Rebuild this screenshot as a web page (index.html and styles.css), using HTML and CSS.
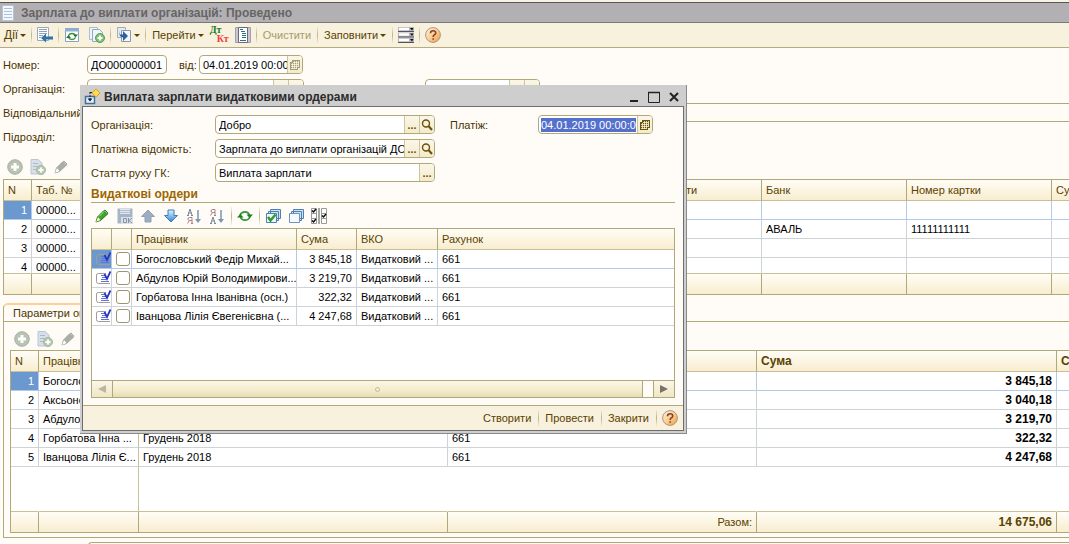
FILE: index.html
```html
<!DOCTYPE html>
<html lang="uk">
<head>
<meta charset="utf-8">
<title>Зарплата до виплати організацій</title>
<link rel="stylesheet" href="styles.css">
</head>
<body>
<svg class="sprite" aria-hidden="true">
  <defs>
    <linearGradient id="g-orange" x1="0" y1="0" x2="1" y2="1"><stop offset="0" stop-color="#fff3dc"/><stop offset=".5" stop-color="#fbcf94"/><stop offset="1" stop-color="#f29a38"/></linearGradient>
    <linearGradient id="g-blue" x1="0" y1="0" x2="0" y2="1"><stop offset="0" stop-color="#e2f3fd"/><stop offset="1" stop-color="#2f86d6"/></linearGradient>
  </defs>
  <symbol id="i-doc" viewBox="0 0 16 16"><path d="M2.500.5h11v15h-11z" fill="#f4f8fc" stroke="#b3c4d4"/><path d="M4 3.500h8M4 6.500h8M4 9.500h8M4 12.500h8" stroke="#a9c3dc"/></symbol>
  <symbol id="i-back" viewBox="0 0 16 16"><path d="M.5.5h11v13H.5z" fill="#fff" stroke="#9aaaba"/><path d="M2 2.500h8M2 4.500h8M2 6.500h8M2 8.500h4M2 10.500h2" stroke="#8ea5bb"/><path d="M4 11l5-4.500v3h7v3H9v3z" fill="#2f74a8"/></symbol>
  <symbol id="i-refreshwin" viewBox="0 0 16 16"><path d="M1.500 1.500h13v13h-13z" fill="#fff" stroke="#87a3c1"/><path d="M1 3h14" stroke="#8fb0d4" stroke-width="3"/><path d="M4.500 8.500Q5.500 6.500 8 6.500t3.500 2M11.500 10.500Q10.500 12.500 8 12.500t-3.500-2" fill="none" stroke="#3c9442" stroke-width="1.500"/><path d="M9 7.500h5L11.500 10.500zM7 11H2L4.500 8z" fill="#1f7c27"/></symbol>
  <symbol id="i-copyadd" viewBox="0 0 16 16"><path d="M.5.5h8v12h-8z" fill="#edf3f8" stroke="#a9bfd2"/><path d="M3.500 2.500h7l3 3v9h-10z" fill="#f0f5fa" stroke="#8faac2"/><circle cx="11" cy="11" r="4.500" fill="#7dc075" stroke="#5c9c57"/><path d="M11 8.500v5M8.500 11h5" stroke="#fff" stroke-width="2"/></symbol>
  <symbol id="i-addrow" viewBox="0 0 16 16"><path d="M1 .5h7l4 3.500v11H1z" fill="#b9cdea" stroke="#8aa3c6"/><path d="M3 4.500h5M3 7.500h7M3 10.500h4" stroke="#6f8fbd"/><circle cx="11" cy="11" r="4.500" fill="#7dae75" stroke="#5c8c57"/><path d="M11 8.500v5M8.500 11h5" stroke="#fff" stroke-width="2"/></symbol>
  <symbol id="i-forward" viewBox="0 0 16 16"><path d="M1.500.5h8v10h-8z" fill="#e4eaf0" stroke="#a0adba"/><path d="M5.500 3.500h9v11h-9z" fill="#f4f7fa" stroke="#8a9aab"/><path d="M3 3v4.500h4V4l5 5-5 5v-3.500Q3 10.500 3 3" fill="#2b6299"/></symbol>
  <symbol id="i-struct" viewBox="0 0 16 16"><path d="M.5.500h15v15H.5z" fill="#c9c5d2" stroke="#a3a0ae"/><path d="M3.500.5h9v15h-9z" fill="#fff" stroke="#6c6a78"/><path d="M5 2.500h3M6 4.500h4M7 6.500h4M7 8.500h4M7 10.500h4M5 13.500h6" stroke="#23708f"/></symbol>
  <symbol id="i-rows" viewBox="0 0 16 16"><path d="M0 0h16v5H0zM0 5.500h16v5H0zM0 11h16v5H0z" fill="#b5b5bb"/><path d="M1 2h10M1 7.500h10M1 13h10" stroke="#fff" stroke-width="2.500"/><path d="M0 4.500h16M0 10h16M0 15.500h16" stroke="#55555c"/><path d="M12 1h3.500L14 3.500zM12 6.500h3.500L14 9zM12 12h3.500L14 14.500z" fill="#111"/></symbol>
  <symbol id="i-help" viewBox="0 0 16 16"><circle cx="8" cy="8" r="7.400" fill="url(#g-orange)" stroke="#aa978a"/><path d="M5.500 6.200q0-2.500 2.600-2.500t2.600 2.200q0 1.200-1.400 2Q8.200 8.500 8.200 10M8.200 11.300v1.500" fill="none" stroke="#87412c" stroke-width="1.600"/></symbol>
  <symbol id="i-add" viewBox="0 0 16 16"><circle cx="8" cy="8" r="7.300" fill="#7ba678" stroke="#777"/><path d="M8 4v8M4 8h8" stroke="#fff" stroke-width="3"/></symbol>
  <symbol id="i-pencil" viewBox="0 0 16 16"><path d="M2 14l1.500-5L9.500 3l3.500 3.500-6.500 6z" fill="#3fa52c" stroke="#1e7413"/><path d="M9.500 3l1.500-1 3 3-1 1.500z" fill="#83cf6f" stroke="#2a861c"/><path d="M4 9l2.500 3L2 14z" fill="#fff1c8"/><path d="M5 8.500l5-5" stroke="#a7e598"/></symbol>
  <symbol id="i-pencil-off" viewBox="0 0 16 16"><path d="M2 14l1.500-5L9.500 3l3.500 3.500-6.500 6z" fill="#6d7f6a" stroke="#596957"/><path d="M9.500 3l1.500-1 3 3-1 1.500z" fill="#93a390" stroke="#66755f"/><path d="M4 9l2.500 3L2 14z" fill="#fff"/></symbol>
  <symbol id="i-save" viewBox="0 0 16 16"><path d="M.5.500h15v15H.5z" fill="#8fa4bd"/><path d="M3 1h10v5H3z" fill="#d8e1eb"/><path d="M3 2.500h10M3 4.500h10" stroke="#9fb2c9"/><path d="M4 9h12v7H4z" fill="#d3dae3"/><path d="M6.500 10.500h3v4h-3zM11.500 10v5M15 10l-3 2.500 3 2.500" fill="none" stroke="#667b95"/></symbol>
  <symbol id="i-up" viewBox="0 0 16 16"><path d="M8 2l6.500 6.500H11V14H5V8.500H1.500z" fill="#9dadc2" stroke="#8f9fb5"/></symbol>
  <symbol id="i-down" viewBox="0 0 16 16"><path d="M8 14L1.500 7.500H5V2h6v5.500h3.500z" fill="url(#g-blue)" stroke="#3b7db9"/></symbol>
  <symbol id="i-az" viewBox="0 0 16 16"><path d="M1 7.500h2M5 7.500h2M2 7l2-6 2 6M2.800 5h2.600" fill="none" stroke="#76879c"/><path d="M6 15.500V9.500H3.500q-1.500 0-1.500 1.500t1.500 1.500H6M3.500 12.500L1.500 15.500M5 15.500h2" fill="none" stroke="#aa8088"/><path d="M12 2v10" stroke="#7b95b2" stroke-width="1.500"/><path d="M9 11h6l-3 4z" fill="#7b95b2"/></symbol>
  <symbol id="i-za" viewBox="0 0 16 16"><path d="M1 15.500h2M5 15.500h2M2 15l2-6 2 6M2.800 13h2.600" fill="none" stroke="#76879c"/><path d="M6 7.500V1.500H3.500Q2 1.500 2 3t1.500 1.500H6M3.500 4.500L1.500 7.500M5 7.500h2" fill="none" stroke="#aa8088"/><path d="M12 2v10" stroke="#7b95b2" stroke-width="1.500"/><path d="M9 11h6l-3 4z" fill="#7b95b2"/></symbol>
  <symbol id="i-refresh" viewBox="0 0 16 16"><path d="M3 7Q4.500 3.800 8 3.800T12.500 7M13 9Q11.500 12.200 8 12.200T3.500 9" fill="none" stroke="#35993a" stroke-width="1.700"/><path d="M9.500 6.500H16L12.700 10zM6.500 9.500H0L3.300 6z" fill="#1f7c27"/></symbol>
  <symbol id="i-checkall" viewBox="0 0 16 16"><path d="M5.500 1.500h10v9h-10zM3.500 3.500h10v9h-10z" fill="#cfe3f4" stroke="#4d81ae"/><path d="M1.500 5.500h10v9h-10z" fill="#eef6fc" stroke="#4d81ae"/><path d="M3 9l2.500 3.500L10.500 6.500" fill="none" stroke="#2e9b33" stroke-width="2.500"/></symbol>
  <symbol id="i-uncheck" viewBox="0 0 16 16"><path d="M5.500 1.500h10v9h-10zM3.500 3.500h10v9h-10z" fill="#cfe3f4" stroke="#4d81ae"/><path d="M1.500 5.500h10v9h-10z" fill="#f6faff" stroke="#6d93be"/></symbol>
  <symbol id="i-invert" viewBox="0 0 16 16"><path d="M.5.500h5v15h-5zM10.500.5h5v15h-5z" fill="#fff" stroke="#999"/><path d="M.5 5.500h5M.5 10.500h5M10.500 5.500h5M10.500 10.500h5" stroke="#999"/><path d="M8 0v16" stroke="#555"/><path d="M1 2.500L2.500 4 5 1M1 12.500L2.500 14 5 11M11 7.500L12.500 9 15 6" fill="none" stroke="#111" stroke-width="1.500"/></symbol>
  <symbol id="i-rowdoc" viewBox="0 0 16 16"><path d="M10 3.500H2.500Q.5 3.500.5 5v6.500q0 2 2 2H14" fill="none" stroke="#a19b9b"/><path d="M5 5.500h4M6 7.500h4M5 9.500h5M5 11.500h8" stroke="#6372d6"/><path d="M8.500 4l2.500 5L14.500 1.500" fill="none" stroke="#2637bd" stroke-width="1.800"/></symbol>
  <symbol id="i-window" viewBox="0 0 16 16"><path d="M1.500 7.500h9v7h-9z" fill="#e6f1fa" stroke="#426f9c" stroke-width="1.500"/><path d="M6 3v8" stroke="#222" stroke-dasharray="2 1"/><path d="M3.500 9.500h5L6 12.500z" fill="#123"/><path d="M6 3.500h3" stroke="#222"/><path d="M12 0l4 4-4 4-4-4z" fill="#ffda4d" stroke="#d9a321"/></symbol>
  <symbol id="i-cal" viewBox="0 0 12 12"><path d="M3 1h8v8H9v2H1V3h2z" fill="currentColor"/><path d="M4 3.500h6M2 5.500h8M2 7.500h8M2 9.500h6M3.500 4v6M5.500 2v8M7.500 2v8M9.500 2v6" stroke="#fbf5e0" stroke-width=".8"/></symbol>
  <symbol id="i-lens" viewBox="0 0 12 12"><circle cx="5" cy="4.500" r="3.500" fill="none" stroke="currentColor" stroke-width="1.400"/><path d="M7.500 7l3.500 4" stroke="currentColor" stroke-width="2"/></symbol>
</svg>

<main class="app">
  <header class="titlebar"><svg class="icon"><use href="#i-doc"/></svg><h1>Зарплата до виплати організацій: Проведено</h1></header>
  <nav class="toolbar">
    <button class="tb-text first">Дії<i class="caret"></i></button><i class="sep"></i>
    <button class="tb-icon" aria-label="Записати"><svg class="icon"><use href="#i-back"/></svg></button><i class="sep"></i>
    <button class="tb-icon" aria-label="Оновити"><svg class="icon"><use href="#i-refreshwin"/></svg></button>
    <button class="tb-icon" aria-label="Копіювати"><svg class="icon"><use href="#i-copyadd"/></svg></button><i class="sep"></i>
    <button class="tb-icon" aria-label="На підставі"><svg class="icon"><use href="#i-forward"/></svg><i class="caret"></i></button><i class="sep"></i>
    <button class="tb-text">Перейти<i class="caret"></i></button>
    <button class="tb-icon dtkt"><span class="dt">Дт</span><span class="kt">Кт</span></button>
    <button class="tb-icon" aria-label="Структура"><svg class="icon"><use href="#i-struct"/></svg></button><i class="sep"></i>
    <button class="tb-text" disabled>Очистити</button><i class="sep"></i>
    <button class="tb-text">Заповнити<i class="caret"></i></button><i class="sep"></i>
    <button class="tb-icon" aria-label="Рядки"><svg class="icon"><use href="#i-rows"/></svg></button><i class="sep"></i>
    <button class="tb-icon" aria-label="Довідка"><svg class="icon"><use href="#i-help"/></svg></button>
  </nav>

  <section class="form">
    <div class="row"><label class="cap" for="num">Номер:</label><span class="field num"><input id="num" value="ДО000000001"></span>
      <label class="cap-from" for="date">від:</label><span class="field date muted"><input id="date" value="04.01.2019 00:00:00"><button aria-label="Календар"><svg><use href="#i-cal"/></svg></button></span></div>
    <div class="row"><label class="cap" for="org">Організація:</label><span class="field org"><input id="org"><button aria-label="Вибрати"></button><button aria-label="Відкрити"></button></span>
      <span class="field dept"><input aria-label="Місяць"><button aria-label="Вибрати місяць"></button><button aria-label="Змінити місяць"></button></span></div>
    <div class="row"><label class="cap" for="resp">Відповідальний:</label><span class="field wide"><input id="resp" readonly></span></div>
    <div class="row"><span class="cap">Підрозділ:</span></div>
  </section>

  <div class="tools faded">
    <button aria-label="Додати"><svg class="icon"><use href="#i-add"/></svg></button>
    <button aria-label="Скопіювати"><svg class="icon"><use href="#i-addrow"/></svg></button>
    <button aria-label="Редагувати"><svg class="icon"><use href="#i-pencil-off"/></svg></button>
  </div>
  <table class="grid employees">
    <colgroup><col class="w28"><col class="w49"><col><col class="w80"><col class="w145"><col class="w145"><col class="w20"></colgroup>
    <thead><tr><th>N</th><th>Таб. №</th><th></th><th>ти</th><th>Банк</th><th>Номер картки</th><th>Су</th></tr></thead>
    <tbody>
      <tr class="current"><td class="n">1</td><td>00000...</td><td></td><td></td><td></td><td></td><td></td></tr>
      <tr><td class="n">2</td><td>00000...</td><td></td><td></td><td>АВАЛЬ</td><td>11111111111</td><td></td></tr>
      <tr><td class="n">3</td><td>00000...</td><td></td><td></td><td></td><td></td><td></td></tr>
      <tr class="cut"><td class="n"><span>4</span></td><td><span>00000...</span></td><td></td><td></td><td></td><td></td><td></td></tr>
    </tbody>
    <tfoot><tr><td></td><td></td><td></td><td></td><td></td><td></td><td></td></tr></tfoot>
  </table>

  <div class="tabs"><button class="tab">Параметри оплати</button></div>
  <section class="panel">
    <div class="tools faded">
      <button aria-label="Додати рядок"><svg class="icon"><use href="#i-add"/></svg></button>
      <button aria-label="Скопіювати рядок"><svg class="icon"><use href="#i-addrow"/></svg></button>
      <button aria-label="Редагувати рядок"><svg class="icon"><use href="#i-pencil-off"/></svg></button>
    </div>
    <table class="grid payments">
      <colgroup><col class="w28"><col class="w100"><col><col class="w309"><col class="w300"><col class="w12"></colgroup>
      <thead><tr><th>N</th><th>Працівник</th><th></th><th></th><th class="b">Сума</th><th class="b">С</th></tr></thead>
      <tbody>
        <tr class="current"><td class="n">1</td><td>Богословс...</td><td>Грудень 2018</td><td>661</td><td class="n b">3 845,18</td><td></td></tr>
        <tr><td class="n">2</td><td>Аксьонов ...</td><td>Грудень 2018</td><td>661</td><td class="n b">3 040,18</td><td></td></tr>
        <tr><td class="n">3</td><td>Абдулов ...</td><td>Грудень 2018</td><td>661</td><td class="n b">3 219,70</td><td></td></tr>
        <tr><td class="n">4</td><td>Горбатова Інна ...</td><td>Грудень 2018</td><td>661</td><td class="n b">322,32</td><td></td></tr>
        <tr><td class="n">5</td><td>Іванцова Лілія Є...</td><td>Грудень 2018</td><td>661</td><td class="n b">4 247,68</td><td></td></tr>
        <tr class="blank"><td></td><td></td><td></td><td></td><td></td><td></td></tr>
      </tbody>
      <tfoot><tr><td></td><td></td><td></td><td class="n">Разом:</td><td class="n b">14 675,06</td><td></td></tr></tfoot>
    </table>
  </section>
  <div class="comment"></div>
</main>

<section class="dialog" role="dialog" aria-labelledby="dlg-title">
  <header class="dlg-head"><svg class="icon"><use href="#i-window"/></svg><h2 id="dlg-title">Виплата зарплати видатковими ордерами</h2>
    <button aria-label="Згорнути"><svg viewBox="0 0 12 12"><path d="M2 10h8" stroke="#222" stroke-width="2"/></svg></button>
    <button aria-label="Розгорнути"><svg viewBox="0 0 12 12"><path d="M.5 1.500h11v10H.5z" fill="none" stroke="#222"/><path d="M0 1.500h12" stroke="#222" stroke-width="1.500"/></svg></button>
    <button aria-label="Закрити вікно"><svg viewBox="0 0 12 12"><path d="M2 2l8 8M10 2l-8 8" stroke="#222" stroke-width="2"/></svg></button>
  </header>
  <div class="dlg-frame">
    <div class="dlg-body">
      <div class="dlg-form">
        <div class="row"><label class="dcap" for="d-org">Організація:</label><span class="field dfield"><input id="d-org" value="Добро"><button aria-label="Вибрати організацію">...</button><button aria-label="Відкрити організацію"><svg><use href="#i-lens"/></svg></button></span>
          <label class="dcap-pay" for="d-date">Платіж:</label><span class="field ddate"><input id="d-date" value="04.01.2019 00:00:0"><button aria-label="Обрати дату"><svg><use href="#i-cal"/></svg></button></span></div>
        <div class="row"><label class="dcap" for="d-doc">Платіжна відомість:</label><span class="field dfield"><input id="d-doc" value="Зарплата до виплати організацій ДО000000001"><button aria-label="Вибрати відомість">...</button><button aria-label="Відкрити відомість"><svg><use href="#i-lens"/></svg></button></span></div>
        <div class="row"><label class="dcap" for="d-art">Стаття руху ГК:</label><span class="field dfield"><input id="d-art" value="Виплата зарплати"><button aria-label="Вибрати статтю">...</button></span></div>
      </div>
      <h3>Видаткові ордери</h3>
      <div class="tools orders-tools">
        <button aria-label="Редагувати ордер"><svg class="icon"><use href="#i-pencil"/></svg></button>
        <button aria-label="Зберегти" class="dim"><svg class="icon"><use href="#i-save"/></svg></button>
        <button aria-label="Вгору"><svg class="icon"><use href="#i-up"/></svg></button>
        <button aria-label="Вниз"><svg class="icon"><use href="#i-down"/></svg></button>
        <button aria-label="За зростанням"><svg class="icon"><use href="#i-az"/></svg></button>
        <button aria-label="За спаданням"><svg class="icon"><use href="#i-za"/></svg></button><i class="sep"></i>
        <button aria-label="Оновити список"><svg class="icon"><use href="#i-refresh"/></svg></button><i class="sep"></i>
        <button aria-label="Позначити всі"><svg class="icon"><use href="#i-checkall"/></svg></button>
        <button aria-label="Зняти позначки"><svg class="icon"><use href="#i-uncheck"/></svg></button>
        <button aria-label="Інвертувати"><svg class="icon"><use href="#i-invert"/></svg></button>
      </div>
      <div class="orders-box">
        <table class="grid orders">
          <colgroup><col class="w20"><col class="w20"><col class="w165"><col class="w60"><col class="w81"><col></colgroup>
          <thead><tr><th></th><th></th><th>Працівник</th><th>Сума</th><th>ВКО</th><th>Рахунок</th></tr></thead>
          <tbody>
            <tr class="current"><td class="ic"><svg class="icon"><use href="#i-rowdoc"/></svg></td><td class="ic"><input type="checkbox" aria-label="Богословський"></td><td>Богословський Федір Михай...</td><td class="n">3 845,18</td><td>Видатковий ...</td><td>661</td></tr>
            <tr><td class="ic"><svg class="icon"><use href="#i-rowdoc"/></svg></td><td class="ic"><input type="checkbox" aria-label="Абдулов"></td><td>Абдулов Юрій Володимирови...</td><td class="n">3 219,70</td><td>Видатковий ...</td><td>661</td></tr>
            <tr><td class="ic"><svg class="icon"><use href="#i-rowdoc"/></svg></td><td class="ic"><input type="checkbox" aria-label="Горбатова"></td><td>Горбатова Інна Іванівна (осн.)</td><td class="n">322,32</td><td>Видатковий ...</td><td>661</td></tr>
            <tr><td class="ic"><svg class="icon"><use href="#i-rowdoc"/></svg></td><td class="ic"><input type="checkbox" aria-label="Іванцова"></td><td>Іванцова Лілія Євегенієвна (...</td><td class="n">4 247,68</td><td>Видатковий ...</td><td>661</td></tr>
          </tbody>
        </table>
        <div class="scroll"><button class="left" aria-label="Ліворуч"></button><div class="thumb"><i></i></div><button class="right" aria-label="Праворуч"></button></div>
      </div>
    </div>
    <footer class="dlg-foot">
      <button>Створити</button><i class="sep"></i><button>Провести</button><i class="sep"></i><button>Закрити</button><i class="sep"></i>
      <button class="help" aria-label="Довідка"><svg class="icon"><use href="#i-help"/></svg></button>
    </footer>
  </div>
</section>
</body>
</html>
```

FILE: styles.css
```css
* { box-sizing: border-box; }
body {
  margin: 0;
  background: #fffcf7;
  color: #4a3500;
  font: 11px/18px "Liberation Sans", Arial, sans-serif;
  overflow: hidden;
}
.sprite { position: absolute; width: 0; height: 0; }
button, input { font: inherit; color: inherit; margin: 0; padding: 0; border: 0; background: none; }
button { display: flex; align-items: center; }
h1, h2, h3 { margin: 0; font-size: 12px; font-weight: bold; white-space: nowrap; }
.icon { width: 16px; height: 16px; display: block; flex: none; }
.app { overflow: hidden; border-top: 2px solid #f8f3e2; }

.titlebar {
  display: flex; align-items: center; height: 21px;
  background: #b3b0b4; border-top: 1px solid #55555a; border-bottom: 1px solid #79777c;
}
.titlebar h1 { margin-left: 5px; color: #656565; }

.toolbar {
  display: flex; align-items: center; height: 25px; padding-left: 4px;
  background: #f7f1de; border-bottom: 1px solid #b5ab80; color: #5a4200;
}
.toolbar button { height: 20px; }
.sep { width: 1px; height: 18px; flex: none; background: linear-gradient(#f7f1de, #bdb28c, #f7f1de); }
.tb-text { padding: 0 6px; }
.tb-text.first { padding: 0 5px 0 0; font-size: 12px; }
.tb-text:disabled { color: #a89c68; }
.tb-icon { padding: 0 4px 0 5px; }
.tb-icon + .sep { margin-left: 1px; }
.caret { border: 3px solid transparent; border-top-color: #5a4200; border-bottom-width: 0; margin-left: 2px; }
.dtkt { flex-direction: column; width: 20px; font: bold 10px/9px "Liberation Serif", serif; }
.toolbar .dtkt { padding: 0 1px 0 0; }
.dt { color: #187a1c; align-self: flex-start; }
.kt { color: #f0403c; align-self: flex-end; }

.form { display: flex; flex-direction: column; gap: 5px; padding: 7px 0 0 3px; }
.row { display: flex; height: 19px; align-items: center; white-space: nowrap; }
.cap { width: 84px; flex: none; }
.cap-from { width: 20px; margin: 0 0 0 12px; }
.field {
  display: flex; height: 19px; overflow: hidden; flex: none;
  border: 1px solid #b0a878; border-radius: 4px; background: #fff;
}
.field input { flex: 1; min-width: 0; padding-left: 3px; color: #000; outline: 0; }
.field button {
  width: 15px; flex: none; justify-content: center; color: #6b5208;
  border-left: 1px solid #cdc49c; background: linear-gradient(#fbf7e8, #f3ebcc); font-weight: bold;
}
.field svg { width: 12px; height: 12px; }
.muted button { color: #a39a78; }
.num { width: 80px; }
.date { width: 104px; }
.org { width: 217px; }
.dept { width: 115px; margin-left: 121px; }
.wide { flex: 1; border-right: 0; border-radius: 4px 0 0 4px; background: #fffcf7; }

.tools { display: flex; align-items: center; gap: 7px; height: 33px; padding: 8px 0 0 4px; }
.app > .tools { margin-left: 3px; }
.faded svg { opacity: .6; filter: saturate(.7); }

.grid { border-collapse: separate; border-spacing: 0; table-layout: fixed; width: 100%; background: #fff; color: #000; border: solid #b0a878; border-width: 1px 0 0 1px; }
.grid th, .grid td { padding: 0 4px; overflow: hidden; white-space: nowrap; text-align: left; font-weight: normal; border: solid #cdd3d6; border-width: 0 1px 1px 0; }
.grid th, .grid tfoot td { height: 21px; background: linear-gradient(#fffdf6, #f8edcf); color: #5a4200; border-color: #b0a878; border-bottom-color: #c9c09a; }
.grid td { height: 19px; }
.grid th:last-child, .grid td:last-child { border-right: 0; padding-right: 0; }
.grid tfoot td { border-bottom-color: #b0a878; }
.grid .n { text-align: right; padding-right: 4px; }
.grid .b { font-weight: bold; font-size: 12px; }
.grid .current td { border-color: #b4c9e8; }
.grid .current td:first-child { background: #6a98cf; color: #fff; }
.grid tr.cut td { height: 16px; border-bottom-color: #c9c09a; }
.cut span { display: block; height: 15px; overflow: hidden; }
.employees { margin-left: 3px; }
.w12 { width: 12px; } .w20 { width: 20px; } .w28 { width: 28px; } .w49 { width: 49px; } .w60 { width: 60px; }
.w80 { width: 80px; } .w81 { width: 81px; } .w100 { width: 100px; } .w145 { width: 145px; }
.w165 { width: 165px; } .w300 { width: 300px; } .w309 { width: 309px; }

.tabs { display: flex; padding: 8px 0 0 3px; }
.tab { height: 18px; padding: 0 9px; border: 1px solid #b0a878; border-top: 2px solid #ffcf93; border-bottom: 0; border-radius: 5px 5px 0 0; }
.panel { margin-left: 3px; padding: 0 0 4px 6px; border: solid #b0a878; border-width: 1px 0 1px 1px; }
.panel .tools { height: 28px; padding-top: 6px; }
.grid .blank td { height: 45px; border-right-color: transparent; border-bottom-color: #c9c09a; }
.grid.payments tbody td:nth-child(2) { border-right-color: #c9c09a; }
.comment { height: 19px; margin: 4px 0 0 88px; border: solid #b0a878; border-width: 1px 0 0 1px; border-radius: 4px 0 0; }

.dialog {
  position: absolute; left: 80px; top: 85px; width: 607px; padding: 0 2px 2px;
  background: #cecece; border: solid #8a8a8a; border-width: 0 1px 1px 0;
}
.dlg-head { display: flex; align-items: center; height: 21px; padding: 2px 4px 0 2px; gap: 8px; }
.dlg-head h2 { flex: 1; margin-left: -4px; color: #2b2b2b; }
.dlg-head svg:not(.icon) { width: 12px; height: 12px; }
.dlg-frame { border: 1px solid #6e6e6e; background: #fffcf7; }
.dlg-body { padding: 8px 8px 7px; }
.dlg-form { display: flex; flex-direction: column; gap: 5px; }
.dcap { width: 124px; }
.dcap-pay { width: 88px; margin-left: 15px; }
.dfield { width: 220px; }
.ddate { width: 115px; }
.ddate input { align-self: center; height: 14px; margin: 0 1px 0 2px; padding: 0; background: #5570cc; color: #fff; }
h3 { height: 21px; padding-top: 4px; line-height: 16px; color: #9c6500; border-bottom: 1px solid #b0a878; }
.orders-tools { height: 25px; padding: 1px 0 0 3px; }
.orders-tools .sep { margin: 0 -2px 0 -1px; }
.dim { opacity: .8; }
.orders-box { display: flex; flex-direction: column; min-height: 170px; background: #fff; border: solid #b0a878; border-width: 0 1px 1px 1px; }
.orders { border-left: 0; }
.grid .ic { padding: 0 0 0 4px; }
.orders input { appearance: none; display: block; width: 14px; height: 14px; border: 1px solid #a0946a; border-radius: 3px; background: #fff; }
.scroll { display: flex; height: 17px; margin-top: auto; border-top: 1px solid #b0a878; background: #fffcf7; }
.scroll button { width: 21px; justify-content: center; background: linear-gradient(#fbf7e8, #efe6c4); }
.scroll .left { border-right: 1px solid #b0a878; }
.scroll .right { border-left: 1px solid #b0a878; }
.scroll button::before { content: ""; border: 4px solid transparent; }
.scroll .left::before { border-left-width: 0; border-right: 8px solid #bbb6a4; }
.scroll .right::before { border-right-width: 0; border-left: 8px solid #77736a; }
.thumb { flex: 1; display: flex; align-items: center; justify-content: center; margin-right: 10px; border-right: 1px solid #b0a878; background: linear-gradient(#fbf7e8, #f3ebcc 60%, #e6dcb5); }
.thumb i { width: 5px; height: 5px; border: 1px solid #c5bb92; border-radius: 50%; }
.dlg-foot { display: flex; align-items: center; justify-content: flex-end; height: 25px; padding-right: 5px; border-top: 1px solid #b0a878; background: #f7f1de; color: #5a4200; }
.dlg-foot button { padding: 0 7px 0 6px; }
.dlg-foot .help { padding: 0 0 0 5px; }
```
